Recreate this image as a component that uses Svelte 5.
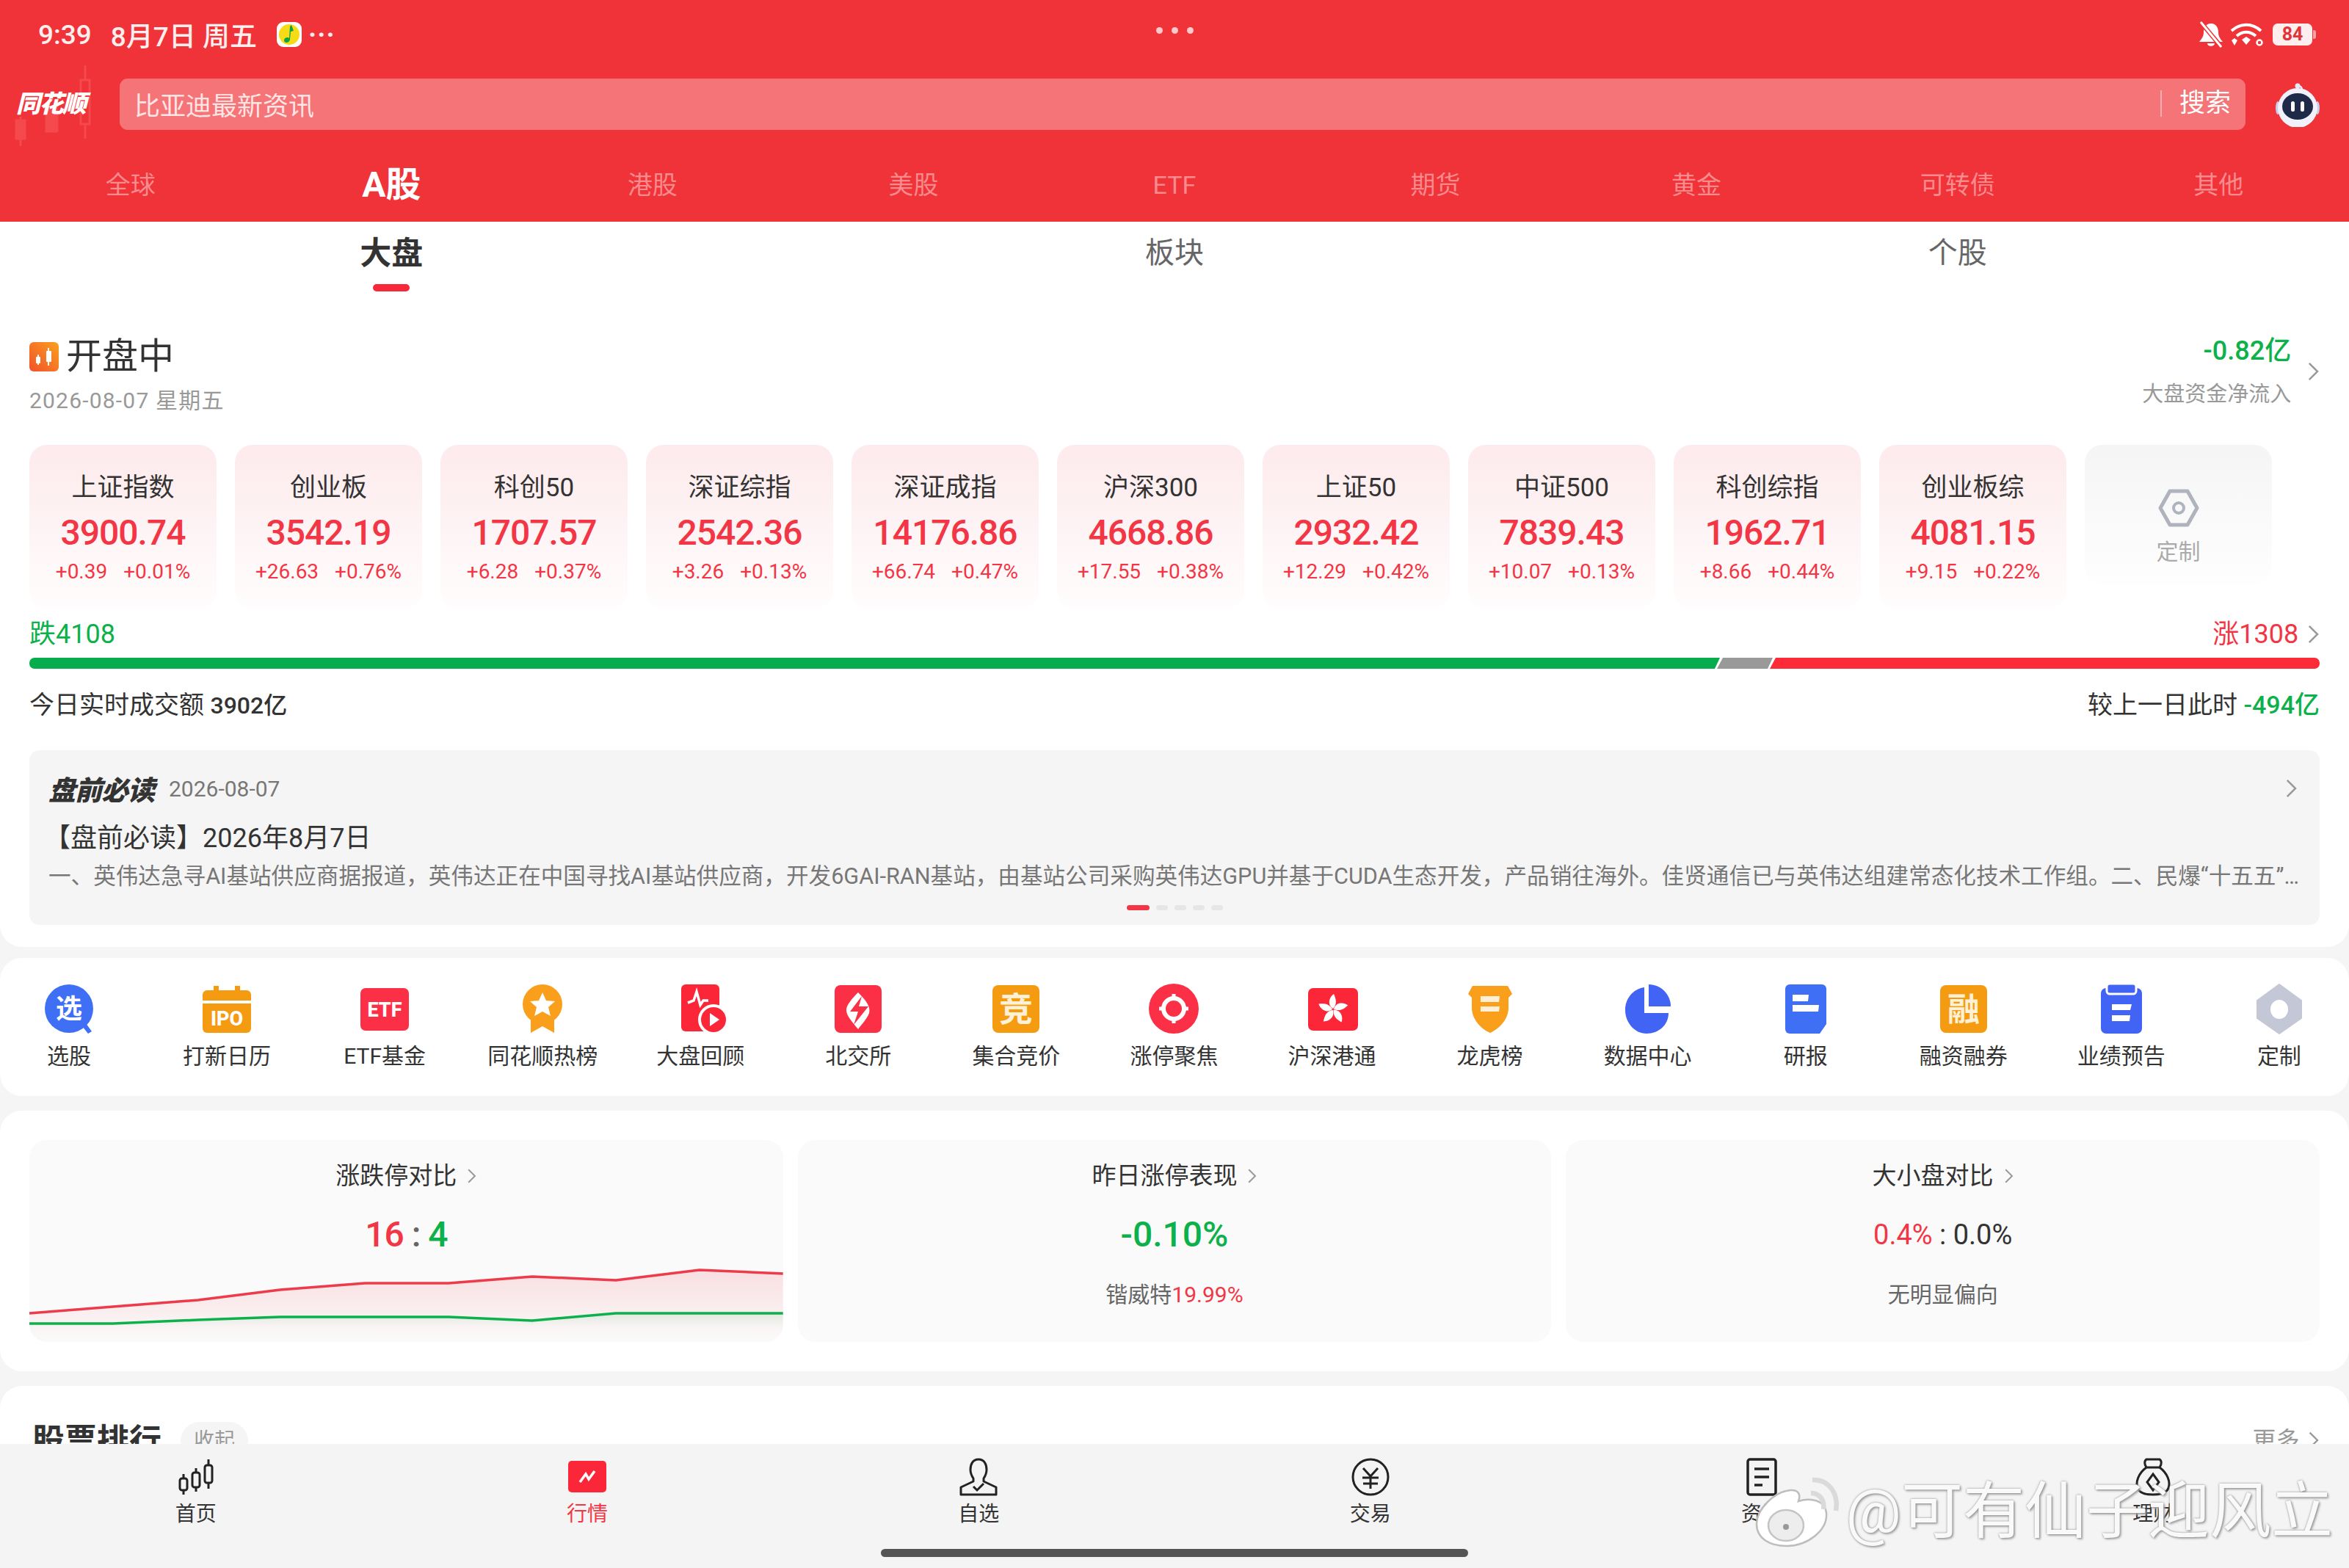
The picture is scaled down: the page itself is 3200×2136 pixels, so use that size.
<script>
	const markets = ["全球", "A股", "港股", "美股", "ETF", "期货", "黄金", "可转债", "其他"];
	const subTabs = ["大盘", "板块", "个股"];

	const indexes = [
		{ name: "上证指数", value: "3900.74", diff: "+0.39", pct: "+0.01%" },
		{ name: "创业板", value: "3542.19", diff: "+26.63", pct: "+0.76%" },
		{ name: "科创50", value: "1707.57", diff: "+6.28", pct: "+0.37%" },
		{ name: "深证综指", value: "2542.36", diff: "+3.26", pct: "+0.13%" },
		{ name: "深证成指", value: "14176.86", diff: "+66.74", pct: "+0.47%" },
		{ name: "沪深300", value: "4668.86", diff: "+17.55", pct: "+0.38%" },
		{ name: "上证50", value: "2932.42", diff: "+12.29", pct: "+0.42%" },
		{ name: "中证500", value: "7839.43", diff: "+10.07", pct: "+0.13%" },
		{ name: "科创综指", value: "1962.71", diff: "+8.66", pct: "+0.44%" },
		{ name: "创业板综", value: "4081.15", diff: "+9.15", pct: "+0.22%" }
	];

	const entries = [
		["xuan", "选股"],
		["ipo", "打新日历"],
		["etf", "ETF基金"],
		["hot", "同花顺热榜"],
		["review", "大盘回顾"],
		["bse", "北交所"],
		["auction", "集合竞价"],
		["focus", "涨停聚焦"],
		["hk", "沪深港通"],
		["dragon", "龙虎榜"],
		["data", "数据中心"],
		["report", "研报"],
		["margin", "融资融券"],
		["forecast", "业绩预告"],
		["custom", "定制"]
	];

	const navItems = [
		["home", "首页"],
		["quote", "行情"],
		["watch", "自选"],
		["trade", "交易"],
		["news", "资讯"],
		["wealth", "理财"]
	];

	const xs = [0, 114, 230, 342, 458, 572, 686, 800, 914, 1028];
	const redY = [236, 227, 218, 204, 195, 195, 186, 191, 177, 182];
	const greenY = [250, 250, 245, 241, 241, 241, 246, 236, 236, 236];
	const line = (ys) => xs.map((x, i) => `${x},${ys[i]}`).join(" ");
	const area = (ys) => `0,275 ${line(ys)} 1028,275`;
</script>

{#snippet chevron(size)}
	<svg class="chevron" width={size * 0.6} height={size} viewBox="0 0 12 20">
		<path d="M2 2l8 8-8 8" fill="none" stroke="#999" stroke-width="1.8" />
	</svg>
{/snippet}

{#snippet entryIcon(name)}
	<svg width="76" height="70" viewBox="-5 -2 76 70">
		{#if name === "xuan"}
			<path d="M56 53l8 11-5 3-8-10z" fill="#3F6FF5" />
			<circle cx="33" cy="33" r="33" fill="#3F6FF5" />
			<text x="33" y="46" text-anchor="middle" font-size="36" font-weight="700" fill="#fff">选</text>
		{:else if name === "ipo"}
			<path d="M15 2h7v6h22V2h7v6h9a6 6 0 0 1 6 6v8H0v-8a6 6 0 0 1 6-6h9z" fill="#F59B12" />
			<path d="M0 26h66v34a6 6 0 0 1-6 6H6a6 6 0 0 1-6-6z" fill="#F59B12" />
			<text x="33" y="56" text-anchor="middle" font-size="27" font-weight="800" fill="#fff">IPO</text>
		{:else if name === "etf"}
			<rect x="0" y="5" width="66" height="58" rx="7" fill="#FB3047" />
			<text x="33" y="44" text-anchor="middle" font-size="27" font-weight="800" fill="#fff">ETF</text>
		{:else if name === "hot"}
			<path d="M17 44v22l16-9 16 9V44z" fill="#FA9F1B" />
			<circle cx="33" cy="27" r="27" fill="#FA9F1B" />
			<path d="M33 11l5 11 12 1-9 8 3 12-11-6-11 6 3-12-9-8 12-1z" fill="#fff" />
		{:else if name === "review"}
			<rect x="7" y="0" width="52" height="64" rx="6" fill="#FB2738" />
			<path d="M16 25l8-3 4-12 5 18 4-6h7" fill="none" stroke="#fff" stroke-width="3.5" />
			<circle cx="51" cy="48" r="19" fill="#FB2738" stroke="#fff" stroke-width="4" />
			<path d="M46 39l13 9-13 9z" fill="#fff" />
		{:else if name === "bse"}
			<rect x="1" y="1" width="64" height="65" rx="8" fill="#FB3047" />
			<path d="M33 11c12 12 17 20 15 28-3 8-9 14-15 22-8-10-15-17-16-25-1-7 8-17 16-25z" fill="#fff" />
			<path d="M38 16L22 37h11l-6 18 20-25H34z" fill="#FB3047" />
		{:else if name === "auction"}
			<rect x="1" y="1" width="64" height="65" rx="8" fill="#F59B12" />
			<text x="33" y="50" text-anchor="middle" font-size="46" font-weight="700" fill="#FFF1D6">竞</text>
		{:else if name === "focus"}
			<circle cx="33" cy="33" r="34" fill="#FB3047" />
			<circle cx="33" cy="33" r="14" fill="none" stroke="#fff" stroke-width="6" />
			<path d="M33 13v8M33 45v8M13 33h8M45 33h8" stroke="#fff" stroke-width="5" />
		{:else if name === "hk"}
			<rect x="0" y="5" width="68" height="58" rx="7" fill="#FB2738" />
			<g fill="#fff">
				<path id="petal" d="M34 33c-8-5-6-15 1-20 3 7 5 13-1 20z" />
				<use href="#petal" transform="rotate(72 34 34)" />
				<use href="#petal" transform="rotate(144 34 34)" />
				<use href="#petal" transform="rotate(216 34 34)" />
				<use href="#petal" transform="rotate(288 34 34)" />
			</g>
		{:else if name === "dragon"}
			<path d="M9 2h48l6 11-5 5v14c0 14-11 28-25 34C19 60 8 46 8 32V18l-5-5z" fill="#FA9F1B" />
			<path d="M20 16h26l-1 8H20zM20 30h26l-1 7H20z" fill="#FFEFD6" />
		{:else if name === "data"}
			<path d="M28 4v35h33c0 16-13 28-30 28C15 67 2 52 2 35 2 19 13 6 28 4z" fill="#4264F5" />
			<path d="M34 0c17 0 30 14 30 30H34z" fill="#4264F5" />
		{:else if name === "report"}
			<path d="M8 0h44a6 6 0 0 1 6 6v48l-9 13H8a6 6 0 0 1-6-6V6a6 6 0 0 1 6-6z" transform="translate(3 0)" fill="#3F6FF5" />
			<path d="M15 14h22l-1 9H15zM15 28h36l-1 9H15z" fill="#fff" />
		{:else if name === "margin"}
			<rect x="1" y="1" width="64" height="65" rx="8" fill="#F59B12" />
			<text x="33" y="50" text-anchor="middle" font-size="44" font-weight="700" fill="#FFF1D6">融</text>
		{:else if name === "forecast"}
			<rect x="5" y="5" width="56" height="62" rx="7" fill="#4264F5" />
			<rect x="13" y="-1" width="40" height="14" rx="4" fill="#4264F5" stroke="#fff" stroke-width="3" />
			<path d="M20 27h27l-2 8H20zM20 42h25l-1 8H20z" fill="#fff" />
		{:else}
			<path d="M33 0l30 22v24L33 67 3 46V22z" fill="#C3C7D6" stroke="#C3C7D6" stroke-width="2" stroke-linejoin="round" />
			<ellipse cx="33" cy="34" rx="12" ry="13" fill="#fff" />
		{/if}
	</svg>
{/snippet}

{#snippet navIcon(name)}
	<svg width="60" height="52" viewBox="0 0 60 52" fill="none" stroke="#222" stroke-width="3">
		{#if name === "home"}
			<path d="M13 22v28M30 14v32M47 2v40" />
			<rect x="8" y="28" width="10" height="16" rx="3" fill="#F4F4F4" />
			<rect x="25" y="20" width="10" height="20" rx="3" fill="#F4F4F4" />
			<rect x="42" y="10" width="10" height="24" rx="3" fill="#F4F4F4" />
		{:else if name === "quote"}
			<rect x="4" y="4" width="52" height="43" rx="5" fill="#FB2738" stroke="none" />
			<path d="M20 33l8-11 4 7 8-11" stroke="#fff" stroke-width="3.5" />
		{:else if name === "watch"}
			<path d="M30 2c-8 0-11 7-11 14 0 5 2 9 4 12v4L6 40v10h48V40l-17-8v-4c2-3 4-7 4-12 0-7-3-14-11-14z" stroke-linejoin="round" />
			<path d="M23 39l5 5 9-9" />
		{:else if name === "trade"}
			<circle cx="30" cy="26" r="24" />
			<path d="M20 14l10 11 10-11M19 27h22M20 35h20M30 25v17" />
		{:else if name === "news"}
			<rect x="11" y="2" width="38" height="48" rx="3" stroke-width="3.5" />
			<path d="M20 15h20M20 26h20M20 37h11" stroke-width="3.5" />
		{:else}
			<path d="M21 13c-11 8-15 20-12 28 2 7 10 9 21 9s19-2 21-9c3-8-1-20-12-28" />
			<path d="M21 13c-3-4-3-9 0-11h18c3 2 3 7 0 11z" />
			<path d="M30 22l8 11-8 11-8-11z" />
		{/if}
	</svg>
{/snippet}

<div class="page">
	<header class="header">
		<div class="status">
			<div class="status-left">
				<span class="time">9:39</span>
				<span>8月7日 周五</span>
				<svg width="36" height="34" viewBox="0 0 36 34">
					<rect x="1" y="0" width="34" height="34" rx="9" fill="#fff" />
					<circle cx="18" cy="17" r="14" fill="#F5DC17" />
					<path d="M21 4l3 8-4 1-1 11c-1 5-8 5-8 1 0-4 5-5 7-3l1-16z" fill="#0BA24C" />
				</svg>
				<span class="more">···</span>
			</div>
			<div class="center-dots"><i></i><i></i><i></i></div>
			<div class="status-right">
				<svg width="36" height="36" viewBox="0 0 36 36">
					<path d="M18 3c-7 0-10 6-10 12 0 6-3 9-6 13h32c-3-4-6-7-6-13 0-6-3-12-10-12zM13 30h10c0 5-10 5-10 0z" fill="#fff" />
					<path d="M3 0l30 36" stroke="#F03338" stroke-width="6" />
					<path d="M4 1l28 34" stroke="#fff" stroke-width="3" />
				</svg>
				<svg width="46" height="36" viewBox="0 0 46 36" fill="none" stroke="#fff" stroke-width="4">
					<path d="M2 13c12-11 28-11 40 0M9 20c8-7 18-7 26 0" />
					<path d="M16 25l6-4 6 4-6 7z" fill="#fff" stroke="none" />
					<path d="M2 26l4-3 4 3-4 7z" fill="#fff" stroke="none" />
					<circle cx="40" cy="29" r="3.5" stroke-width="2.5" />
				</svg>
				<div class="battery">
					<span>84</span>
				</div>
			</div>
		</div>

		<div class="search-row">
			<div class="logo">
				<svg class="logo-bg" width="130" height="110" viewBox="0 0 130 110" fill="none" stroke="#F4494D" stroke-width="3">
					<path d="M108 0v100M20 70v40M70 50v40" />
					<rect x="102" y="20" width="12" height="60" fill="#F03338" />
					<rect x="14" y="75" width="12" height="25" fill="#F4494D" />
					<rect x="55" y="60" width="14" height="30" fill="#F4494D" />
				</svg>
				<span>同花顺</span>
			</div>
			<div class="search">
				<span class="placeholder">比亚迪最新资讯</span>
				<span class="search-btn">搜索</span>
			</div>
			<svg class="robot" width="66" height="62" viewBox="0 0 66 62">
				<circle cx="33" cy="6" r="3.5" fill="#E8EAF8" />
				<path d="M33 6c4 0 6 2 6 6" fill="none" stroke="#E8EAF8" stroke-width="2.5" />
				<ellipse cx="6" cy="36" rx="3" ry="9" fill="#C9CDEB" />
				<ellipse cx="60" cy="36" rx="3" ry="9" fill="#C9CDEB" />
				<circle cx="33" cy="36" r="27" fill="#F0F1FA" />
				<ellipse cx="33" cy="34" rx="21" ry="18" fill="#1F2A48" />
				<rect x="24" y="27" width="5" height="14" rx="2.5" fill="#fff" />
				<rect x="37" y="27" width="5" height="14" rx="2.5" fill="#fff" />
			</svg>
		</div>

		<nav class="markets">
			{#each markets as market}
				<span class:active={market === "A股"}>{market}</span>
			{/each}
		</nav>
	</header>

	<main class="content">
		<section class="card-section market">
			<div class="sub-tabs">
				{#each subTabs as tab, i}
					<div class="sub-tab" class:active={i === 0}>
						<span>{tab}</span>
						{#if i === 0}<i></i>{/if}
					</div>
				{/each}
			</div>

			<div class="market-head">
				<div>
					<div class="open-state">
						<svg width="40" height="40" viewBox="0 0 40 40">
							<defs>
								<linearGradient id="openGrad" x1="1" y1="0" x2="0" y2="1">
									<stop offset="0" stop-color="#F9A020" />
									<stop offset="1" stop-color="#F2502A" />
								</linearGradient>
							</defs>
							<rect width="40" height="40" rx="6" fill="url(#openGrad)" />
							<path d="M12 17v14M26 8v24" stroke="#fff" stroke-width="2" />
							<rect x="9" y="20" width="6" height="9" rx="1" fill="#fff" />
							<rect x="23" y="12" width="7" height="15" rx="1" fill="#fff" />
						</svg>
						<span>开盘中</span>
					</div>
					<div class="open-date">2026-08-07 星期五</div>
				</div>
				<div class="flow">
					<div class="flow-text">
						<div class="flow-amount">-0.82亿</div>
						<div class="flow-label">大盘资金净流入</div>
					</div>
					{@render chevron(28)}
				</div>
			</div>

			<div class="index-row">
				{#each indexes as item}
					<div class="index-card">
						<div class="index-name">{item.name}</div>
						<div class="index-value">{item.value}</div>
						<div class="index-change">
							<span>{item.diff}</span>
							<span>{item.pct}</span>
						</div>
					</div>
				{/each}
				<div class="index-card custom">
					<svg width="56" height="52" viewBox="0 0 56 52" fill="none" stroke="#AEB3BC" stroke-width="5">
						<path d="M16 3h24l13 23-13 23H16L3 26z" stroke-linejoin="round" />
						<circle cx="28" cy="26" r="7" stroke-width="4" />
					</svg>
					<span>定制</span>
				</div>
			</div>

			<div class="breadth">
				<span class="down">跌4108</span>
				<span class="up">涨1308 {@render chevron(28)}</span>
			</div>
			<div class="breadth-bar">
				<i class="seg-green"></i>
				<i class="seg-grey"></i>
				<i class="seg-red"></i>
			</div>

			<div class="turnover">
				<span>今日实时成交额 <b>3902亿</b></span>
				<span>较上一日此时 <em>-494亿</em></span>
			</div>

			<div class="preread">
				<div class="preread-head">
					<div class="preread-title">
						<strong>盘前必读</strong>
						<span>2026-08-07</span>
					</div>
					{@render chevron(28)}
				</div>
				<div class="preread-headline">【盘前必读】2026年8月7日</div>
				<div class="preread-body">一、英伟达急寻AI基站供应商据报道，英伟达正在中国寻找AI基站供应商，开发6GAI-RAN基站，由基站公司采购英伟达GPU并基于CUDA生态开发，产品销往海外。佳贤通信已与英伟达组建常态化技术工作组。二、民爆“十五五”规划发布，行业集中度进一步提升，多家公司积极布局海外市场</div>
				<div class="pager">
					<i class="on"></i><i></i><i></i><i></i><i></i>
				</div>
			</div>
		</section>

		<section class="card-section entries">
			{#each entries as [icon, label]}
				<div class="entry">
					{@render entryIcon(icon)}
					<span>{label}</span>
				</div>
			{/each}
		</section>

		<section class="card-section compare">
			<div class="compare-card">
				<div class="compare-title">涨跌停对比 {@render chevron(22)}</div>
				<div class="compare-ratio"><span class="red">16</span> <span class="sep">:</span> <span class="green">4</span></div>
				<svg class="chart" viewBox="0 170 1028 105" preserveAspectRatio="none">
					<defs>
						<linearGradient id="redFill" x1="0" y1="0" x2="0" y2="1">
							<stop offset="0" stop-color="#F23645" stop-opacity="0.14" />
							<stop offset="1" stop-color="#F23645" stop-opacity="0" />
						</linearGradient>
						<linearGradient id="greenFill" x1="0" y1="0" x2="0" y2="1">
							<stop offset="0" stop-color="#0DB14B" stop-opacity="0.1" />
							<stop offset="0.5" stop-color="#0DB14B" stop-opacity="0" />
						</linearGradient>
					</defs>
					<polygon points={area(redY)} fill="url(#redFill)" />
					<polygon points={area(greenY)} fill="url(#greenFill)" />
					<polyline points={line(redY)} fill="none" stroke="#EE3B4B" stroke-width="3.5" />
					<polyline points={line(greenY)} fill="none" stroke="#0DB14B" stroke-width="3.5" />
				</svg>
			</div>
			<div class="compare-card">
				<div class="compare-title">昨日涨停表现 {@render chevron(22)}</div>
				<div class="compare-big green">-0.10%</div>
				<div class="compare-sub">锴威特<span class="red">19.99%</span></div>
			</div>
			<div class="compare-card">
				<div class="compare-title">大小盘对比 {@render chevron(22)}</div>
				<div class="compare-mid"><span class="red">0.4%</span> : 0.0%</div>
				<div class="compare-sub">无明显偏向</div>
			</div>
		</section>

		<section class="card-section rank">
			<div class="rank-left">
				<strong>股票排行</strong>
				<span class="pill">收起</span>
			</div>
			<span class="rank-more">更多 {@render chevron(26)}</span>
		</section>
	</main>

	<footer class="bottom">
		<div class="bottom-tabs">
			{#each navItems as [icon, label]}
				<div class="bottom-tab" class:active={icon === "quote"}>
					{@render navIcon(icon)}
					<span>{label}</span>
				</div>
			{/each}
		</div>
		<div class="home-bar"></div>
	</footer>

	<div class="watermark">
		<svg width="116" height="96" viewBox="0 0 116 96" fill="none">
			<path d="M2 64c0-20 24-44 46-46 12-1 14 7 11 15 16-5 36-2 38 16 2 24-26 45-54 45C20 94 2 84 2 64z" fill="#fff" stroke="#BDBDBD" stroke-width="2.5" />
			<ellipse cx="42" cy="66" rx="24" ry="21" fill="#EDEDED" stroke="#C4C4C4" stroke-width="2.5" />
			<circle cx="42" cy="68" r="4" fill="#999" />
			<path d="M76 22c12 0 19 10 17 22M78 4c22-1 36 18 32 42" stroke="#DADADA" stroke-width="6.5" />
		</svg>
		<span>@可有仙子迎风立</span>
	</div>
</div>

<style>
	:global(body) {
		margin: 0;
		background: #f4f4f4;
	}

	* {
		box-sizing: border-box;
	}

	.page {
		position: relative;
		display: flex;
		flex-direction: column;
		width: 3200px;
		height: 2136px;
		overflow: hidden;
		background: #f5f5f5;
		color: #333;
		font-family: Roboto, "Noto Sans CJK SC", sans-serif;
	}

	svg {
		display: block;
		font-family: Roboto, "Noto Sans CJK SC", sans-serif;
	}

	i {
		display: block;
	}

	/* red header */
	.header {
		height: 302px;
		flex: none;
		background: #f03338;
		color: #fff;
	}

	.status {
		position: relative;
		display: flex;
		justify-content: space-between;
		align-items: center;
		height: 94px;
		padding: 0 50px 0 52px;
		font-size: 37px;
		font-weight: 500;
	}

	.status-left {
		display: flex;
		align-items: center;
		gap: 26px;
		color: #ffeeee;
	}

	.status-left .more {
		margin-left: -18px;
		font-weight: 700;
		letter-spacing: 1px;
	}

	.center-dots {
		position: absolute;
		left: 1575px;
		top: 37px;
		display: flex;
		gap: 12px;
	}

	.center-dots i {
		width: 9px;
		height: 9px;
		border-radius: 50%;
		background: #ffc9c9;
	}

	.status-right {
		display: flex;
		align-items: center;
		gap: 8px;
	}

	.battery {
		position: relative;
		width: 54px;
		height: 30px;
		margin-left: 4px;
		border-radius: 7px;
		background: #ffeeee;
		color: #e0333a;
		font-size: 25px;
		font-weight: 700;
		line-height: 30px;
		text-align: center;
	}

	.battery::after {
		content: "";
		position: absolute;
		right: -5px;
		top: 9px;
		width: 4px;
		height: 12px;
		border-radius: 0 3px 3px 0;
		background: #f8a5a5;
	}

	.search-row {
		display: flex;
		align-items: center;
		height: 70px;
		margin-top: 13px;
		padding-right: 40px;
	}

	.logo {
		position: relative;
		width: 163px;
		height: 70px;
		flex: none;
		padding-left: 22px;
		font-size: 33px;
		font-style: italic;
		font-weight: 900;
		line-height: 70px;
		letter-spacing: -1.5px;
	}

	.logo span {
		position: relative;
	}

	.logo-bg {
		position: absolute;
		left: 8px;
		top: -18px;
	}

	.search {
		display: flex;
		justify-content: space-between;
		align-items: center;
		width: 2896px;
		height: 70px;
		flex: none;
		padding: 0 20px 2px;
		border-radius: 11px;
		background: #f57478;
		font-size: 35px;
	}

	.placeholder {
		color: #ffe4e4;
	}

	.search-btn {
		padding-left: 24px;
		border-left: 2px solid #fbaeb0;
		line-height: 36px;
	}

	.robot {
		margin-left: 38px;
		flex: none;
	}

	.markets {
		display: grid;
		grid-template-columns: repeat(9, 1fr);
		padding-top: 50px;
		text-align: center;
	}

	.markets span {
		color: #f98a8d;
		font-size: 34px;
		line-height: 50px;
	}

	.markets .active {
		color: #fff;
		font-size: 48px;
		font-weight: 700;
	}

	/* white sections */
	.content {
		flex: 1;
		min-height: 0;
		overflow: hidden;
	}

	.card-section {
		background: #fff;
		border-radius: 30px;
	}

	.market {
		padding: 0 40px 30px;
		border-radius: 0 0 30px 30px;
	}

	.sub-tabs {
		display: grid;
		grid-template-columns: repeat(3, 1fr);
		margin: 0 -40px;
		height: 95px;
	}

	.sub-tab {
		display: flex;
		flex-direction: column;
		align-items: center;
		padding-top: 18px;
		color: #666;
		font-size: 40px;
		line-height: 50px;
	}

	.sub-tab.active {
		color: #333;
		font-size: 43px;
		font-weight: 700;
	}

	.sub-tab i {
		width: 50px;
		height: 10px;
		margin-top: 17px;
		border-radius: 5px;
		background: #f8283b;
	}

	.market-head {
		display: flex;
		justify-content: space-between;
		margin-top: 59px;
	}

	.open-state {
		display: flex;
		align-items: center;
		gap: 10px;
		font-size: 49px;
		line-height: 60px;
	}

	.open-date {
		margin-top: 10px;
		color: #999;
		font-size: 30px;
		letter-spacing: 1.2px;
		line-height: 40px;
	}

	.flow {
		display: flex;
		align-items: center;
		gap: 22px;
		height: 100px;
	}

	.flow-text {
		text-align: right;
	}

	.flow-amount {
		color: #0db14b;
		font-size: 36px;
		font-weight: 500;
		line-height: 44px;
	}

	.flow-label {
		margin-top: 17px;
		color: #999;
		font-size: 29px;
		line-height: 40px;
	}

	.index-row {
		display: flex;
		gap: 25px;
		margin-top: 40px;
	}

	.index-card {
		display: flex;
		flex-direction: column;
		align-items: center;
		width: 255px;
		height: 223px;
		flex: none;
		padding-top: 37px;
		border-radius: 24px;
		background: linear-gradient(#fdeaec, #fffdfd);
	}

	.index-name {
		color: #333;
		font-size: 35px;
		line-height: 44px;
	}

	.index-value {
		margin-top: 9px;
		color: #f23645;
		font-size: 48px;
		font-weight: 500;
		letter-spacing: -1px;
		line-height: 60px;
	}

	.index-change {
		display: flex;
		gap: 22px;
		margin-top: 5px;
		color: #f23645;
		font-size: 28px;
		line-height: 36px;
		white-space: nowrap;
	}

	.index-card.custom {
		height: 190px;
		padding-top: 60px;
		gap: 9px;
		background: linear-gradient(#f5f5f6, #fefefe);
		color: #aaa;
		font-size: 30px;
	}

	.breadth {
		display: flex;
		justify-content: space-between;
		margin-top: 13px;
		font-size: 36px;
		line-height: 44px;
	}

	.down {
		color: #0db14b;
	}

	.up {
		display: flex;
		align-items: center;
		gap: 12px;
		color: #f23645;
	}

	.breadth-bar {
		display: flex;
		margin-top: 10px;
		height: 15px;
	}

	.seg-green {
		width: 2303px;
		background: #07ac4d;
		border-radius: 7px 0 0 7px;
		clip-path: polygon(0 0, 100% 0, calc(100% - 7px) 100%, 0 100%);
	}

	.seg-grey {
		width: 76px;
		margin-left: -4px;
		background: #999;
		clip-path: polygon(8px 0, 100% 0, calc(100% - 7px) 100%, 0 100%);
	}

	.seg-red {
		width: 749px;
		margin-left: -4px;
		background: #fd2b37;
		border-radius: 0 7px 7px 0;
		clip-path: polygon(8px 0, 100% 0, 100% 100%, 0 100%);
	}

	.turnover {
		display: flex;
		justify-content: space-between;
		margin-top: 27px;
		font-size: 34px;
		line-height: 44px;
	}

	.turnover b {
		font-size: 32px;
		font-weight: 500;
	}

	.turnover em {
		color: #0db14b;
		font-style: normal;
		font-weight: 500;
	}

	.preread {
		height: 238px;
		margin-top: 39px;
		padding: 27px 26px 0;
		border-radius: 14px;
		background: #f5f5f5;
	}

	.preread-head {
		display: flex;
		justify-content: space-between;
		align-items: center;
		height: 50px;
		padding-right: 4px;
	}

	.preread-title {
		display: flex;
		align-items: center;
		gap: 20px;
	}

	.preread-title strong {
		font-size: 37px;
		font-style: italic;
		font-weight: 900;
		letter-spacing: -1px;
	}

	.preread-title span {
		color: #777;
		font-size: 30px;
	}

	.preread-headline {
		margin-top: 18px;
		margin-left: -6px;
		font-size: 36px;
		line-height: 50px;
	}

	.preread-body {
		margin-top: 5px;
		color: #777;
		font-size: 30.6px;
		line-height: 44px;
		white-space: nowrap;
		overflow: hidden;
		text-overflow: ellipsis;
	}

	.pager {
		display: flex;
		justify-content: center;
		gap: 9px;
		margin-top: 17px;
	}

	.pager i {
		width: 16px;
		height: 7px;
		border-radius: 4px;
		background: #e6e6e6;
	}

	.pager .on {
		width: 31px;
		background: #f23645;
	}

	.entries {
		display: flex;
		justify-content: space-between;
		height: 188px;
		margin-top: 15px;
		padding: 34px 35px 0 34px;
	}

	.entry {
		display: flex;
		flex-direction: column;
		align-items: center;
		width: 120px;
	}

	.entry span {
		margin-top: 10px;
		font-size: 30px;
		line-height: 40px;
		white-space: nowrap;
	}

	.compare {
		display: flex;
		gap: 20px;
		height: 355px;
		margin-top: 20px;
		padding: 40px;
	}

	.compare-card {
		display: flex;
		flex-direction: column;
		align-items: center;
		width: 1027px;
		height: 275px;
		padding-top: 26px;
		border-radius: 24px;
		background: #fafafa;
		overflow: hidden;
	}

	.compare-title {
		display: flex;
		align-items: center;
		gap: 14px;
		font-size: 33px;
		line-height: 46px;
	}

	.compare-ratio {
		margin-top: 27px;
		font-size: 48px;
		font-weight: 500;
		line-height: 60px;
		letter-spacing: -1px;
	}

	.compare-ratio .sep {
		color: #666;
	}

	.chart {
		width: 100%;
		height: 105px;
		margin-top: 11px;
		flex: none;
	}

	.compare-big {
		margin-top: 27px;
		font-size: 48px;
		font-weight: 500;
		line-height: 60px;
	}

	.compare-mid {
		margin-top: 27px;
		font-size: 38px;
		line-height: 60px;
	}

	.compare-sub {
		margin-top: 30px;
		color: #666;
		font-size: 30px;
		line-height: 44px;
	}

	.red {
		color: #f23645;
	}

	.green {
		color: #0db14b;
	}

	.rank {
		display: flex;
		justify-content: space-between;
		align-items: flex-start;
		height: 200px;
		margin-top: 20px;
		padding: 0 40px 0 44px;
	}

	.rank-left {
		display: flex;
		gap: 26px;
		margin-top: 49px;
	}

	.rank-left strong {
		font-size: 44px;
		font-weight: 700;
		line-height: 52px;
	}

	.pill {
		height: 52px;
		padding: 0 18px;
		border-radius: 26px;
		background: #f5f5f5;
		color: #999;
		font-size: 28px;
		line-height: 52px;
	}

	.rank-more {
		display: flex;
		align-items: center;
		gap: 12px;
		margin-top: 50px;
		color: #999;
		font-size: 32px;
		line-height: 48px;
	}

	/* bottom bar */
	.bottom {
		height: 169px;
		flex: none;
		background: #f4f4f4;
	}

	.bottom-tabs {
		display: grid;
		grid-template-columns: repeat(6, 1fr);
		padding-top: 19px;
	}

	.bottom-tab {
		display: flex;
		flex-direction: column;
		align-items: center;
		gap: 7px;
		color: #333;
		font-size: 28px;
		line-height: 36px;
	}

	.bottom-tab.active {
		color: #f23645;
	}

	.home-bar {
		width: 800px;
		height: 11px;
		margin: 29px auto 0;
		border-radius: 6px;
		background: #555;
	}

	/* weibo watermark over the bar */
	.watermark {
		position: absolute;
		right: 22px;
		bottom: 26px;
		display: flex;
		align-items: center;
		gap: 8px;
		color: rgba(255, 255, 255, 0.95);
		font-size: 84px;
		line-height: 100px;
		white-space: nowrap;
		text-shadow: 0 0 3px #888, 2px 2px 3px #aaa;
	}
</style>
